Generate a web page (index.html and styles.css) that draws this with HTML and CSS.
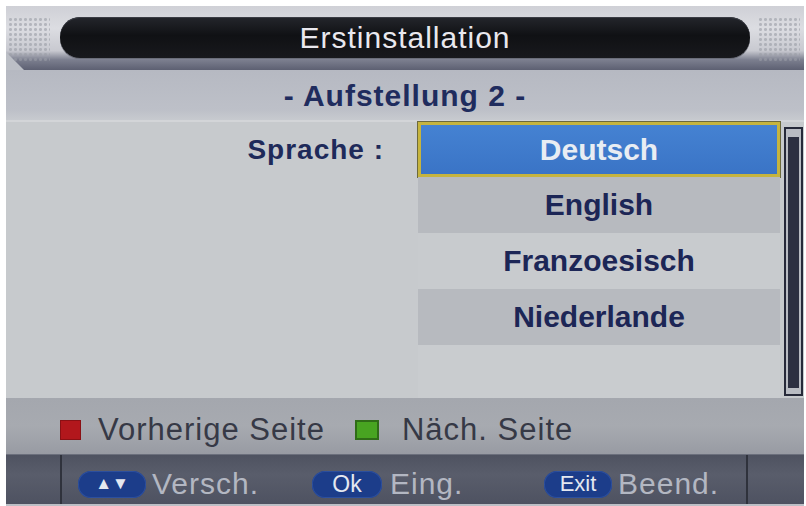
FILE: index.html
```html
<!DOCTYPE html>
<html lang="de">
<head>
<meta charset="utf-8">
<title>Erstinstallation</title>
<link rel="stylesheet" href="styles.css">
</head>
<body>
<div class="screen">
  <header class="header">
    <div class="dots dots-left"></div>
    <div class="title-pill">Erstinstallation</div>
    <div class="dots dots-right"></div>
  </header>
  <div class="subtitle">- Aufstellung 2 -</div>
  <main class="content">
    <div class="label-col">
      <div class="label">Sprache :</div>
    </div>
    <ul class="lang-list">
      <li class="row selected">Deutsch</li>
      <li class="row dark">English</li>
      <li class="row">Franzoesisch</li>
      <li class="row dark">Niederlande</li>
      <li class="row empty"></li>
    </ul>
    <div class="scrollbar"><div class="track"></div></div>
  </main>
  <div class="legend">
    <span class="key red"></span><span class="legend-text first">Vorherige Seite</span>
    <span class="key green"></span><span class="legend-text">Näch. Seite</span>
  </div>
  <footer class="bottombar">
    <div class="cell side"></div>
    <div class="cell center">
      <div class="group g1"><span class="btn btn-arrows">▲▼</span><span class="hint">Versch.</span></div>
      <div class="group g2"><span class="btn btn-ok">Ok</span><span class="hint">Eing.</span></div>
      <div class="group g3"><span class="btn btn-exit">Exit</span><span class="hint">Beend.</span></div>
    </div>
    <div class="cell side"></div>
  </footer>
</div>
</body>
</html>
```

FILE: styles.css
```css
* { box-sizing: border-box; }

html, body {
  margin: 0;
  padding: 0;
  background: #ffffff;
  width: 806px;
  height: 506px;
  overflow: hidden;
}

.screen {
  margin: 6px 2px 0 6px;
  width: 798px;
  height: 500px;
  display: flex;
  flex-direction: column;
  background: #bcbfc6;
  font-family: "Liberation Sans", Arial, sans-serif;
}

/* ---------- header ---------- */
.header {
  height: 64px;
  display: flex;
  align-items: flex-start;
  padding-top: 11px;
  background: linear-gradient(180deg, #cfd0d6 0%, #dcdde2 35%, #c8c9d0 70%, #7c7f8f 84%, #5d6072 100%);
  clip-path: polygon(0 0, 100% 0, 100% 100%, 18px 100%, 0 72%);
}

.dots {
  width: 42px;
  height: 44px;
  background-image: radial-gradient(circle, #9a9da6 1.2px, transparent 1.8px);
  background-size: 5px 5px;
  opacity: 0.6;
}
.dots-left { margin: 0 10px 0 2px; }
.dots-right { margin: 0 4px 0 8px; }

.title-pill {
  flex: 1;
  height: 41px;
  border-radius: 20px;
  background: linear-gradient(180deg, #24262c 0%, #101114 45%, #18191d 100%);
  box-shadow: 0 1px 0 #6b6e7a, inset 0 1px 0 #3a3c44;
  color: #e9e8ee;
  font-size: 30px;
  letter-spacing: 1px;
  line-height: 41px;
  text-align: center;
}

/* ---------- subtitle ---------- */
.subtitle {
  height: 52px;
  line-height: 52px;
  text-align: center;
  font-size: 30px;
  font-weight: bold;
  letter-spacing: 1px;
  color: #1f2c5e;
  background: linear-gradient(180deg, #b6b9c2 0%, #bdc0c8 80%, #c7cacf 100%);
  border-bottom: 2px solid #d3d5d8;
}

/* ---------- content ---------- */
.content {
  height: 276px;
  display: flex;
  align-items: stretch;
  background: #c7cacd;
}

.label-col {
  flex: 1;
  padding-right: 34px;
}
.label {
  height: 55px;
  line-height: 55px;
  text-align: right;
  font-size: 28px;
  font-weight: bold;
  letter-spacing: 1px;
  color: #1e2a5a;
}

.lang-list {
  list-style: none;
  margin: 0;
  padding: 0;
  width: 362px;
  display: flex;
  flex-direction: column;
}

.row {
  height: 56px;
  line-height: 56px;
  text-align: center;
  font-size: 30px;
  font-weight: bold;
  color: #1c2656;
  background: #c8cbce;
}
.row.dark { background: #b7babf; }
.row.empty { flex: 1; background: #c9cccf; }

.row.selected {
  height: 55px;
  line-height: 49px;
  border: 3px solid #c6b43e;
  background: linear-gradient(180deg, #4582d2 0%, #3a74c6 100%);
  color: #e8edf3;
  box-shadow: 0 0 0 1px #6d6a3c;
}

.scrollbar {
  width: 19px;
  margin: 5px 1px 2px 4px;
  border: 2px solid #262939;
  padding: 2px;
  background: #b9bcc3;
  display: flex;
  flex-direction: column;
}
.track {
  flex: 1;
  margin: 6px 0 4px;
  background: #2c2f41;
}

/* ---------- legend ---------- */
.legend {
  height: 56px;
  display: flex;
  align-items: center;
  padding: 8px 0 0 54px;
  background: linear-gradient(180deg, #a4a7ae 0%, #a7aab0 50%, #989ba3 100%);
}
.key {
  display: inline-block;
  width: 21px;
  height: 20px;
}
.key.red {
  background: #b2171c;
  box-shadow: inset 0 0 0 1px #8a1014;
}
.key.green {
  width: 24px;
  background: #48a421;
  box-shadow: inset 0 0 0 2px #2f6c17;
}
.legend-text {
  font-size: 31px;
  letter-spacing: 1px;
  color: #363946;
  margin-left: 17px;
}
.legend-text.first { margin-right: 30px; }
.key.green + .legend-text { margin-left: 23px; }

/* ---------- bottom bar ---------- */
.bottombar {
  height: 50px;
  display: flex;
  background: linear-gradient(180deg, #4f5361 0%, #595d6b 40%, #4e5261 100%);
  border-top: 1px solid #6b6f7c;
}
.cell.side { width: 54px; }
.cell.side:last-child { flex: 1; width: auto; }
.cell.center {
  width: 688px;
  display: flex;
  align-items: center;
  padding: 9px 0 0 16px;
  border-left: 2px solid #2f323c;
  border-right: 2px solid #2f323c;
}
.group {
  display: flex;
  align-items: center;
}
.group.g1 { width: 234px; }
.group.g2 { width: 232px; }
.btn {
  display: inline-flex;
  align-items: center;
  justify-content: center;
  height: 27px;
  border-radius: 13px;
  background: #1c3d8a;
  box-shadow: inset 0 0 0 1px #2c4f9e;
  color: #e4e8f0;
  font-size: 23px;
}
.btn-arrows { width: 68px; font-size: 17px; letter-spacing: 0; }
.btn-ok { width: 70px; }
.btn-exit { width: 68px; font-size: 22px; }
.hint {
  margin-left: 6px;
  font-size: 30px;
  letter-spacing: 1px;
  color: #b3b7c2;
}
.btn-ok + .hint { margin-left: 8px; }
```
